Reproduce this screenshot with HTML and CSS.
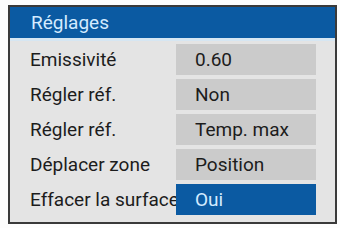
FILE: index.html
```html
<html><head>
    <title>Réglages</title>
    <meta charset="UTF-8">
    <link rel="stylesheet" href="styles.css">
</head>
<body>
  <div class="menu">
    <div class="title">Réglages</div>
    <div class="list">
      <div class="row"><span class="lbl">Emissivité</span><span class="val">0.60</span></div>
      <div class="row"><span class="lbl">Régler réf.</span><span class="val">Non</span></div>
      <div class="row"><span class="lbl">Régler réf.</span><span class="val">Temp. max</span></div>
      <div class="row"><span class="lbl">Déplacer zone</span><span class="val">Position</span></div>
      <div class="row"><span class="lbl">Effacer la surface</span><span class="val sel">Oui</span></div>
    </div>
  </div>
</body></html>
```

FILE: styles.css
```css
body {
  margin: 0;
  background: #fdfdfd;
  font-family: Roboto, "Liberation Sans", sans-serif;
  font-size: 19px;
  color: #1c1c1c;
}
.menu {
  margin: 5px 0 0 8px;
  width: 325px;
  height: 215px;
  border: 2px solid #3a3a3a;
  background: #e4e4e4;
  display: flex;
  flex-direction: column;
}
.title {
  height: 31px;
  line-height: 31px;
  padding-left: 21px;
  background: #0b5aa2;
  color: #d4ebff;
  border-bottom: 3px solid #d6e6f2;
}
.list {
  display: flex;
  flex-direction: column;
  gap: 4px;
  padding: 3px 19px 0 20px;
}
.row {
  display: flex;
  height: 31px;
  align-items: stretch;
}
.lbl {
  width: 146px;
  line-height: 31px;
  white-space: nowrap;
}
.val {
  flex: 1;
  background: #cbcbcb;
  line-height: 31px;
  padding-left: 19px;
}
.val.sel {
  background: #0b5aa2;
  color: #d4ebff;
}
```
